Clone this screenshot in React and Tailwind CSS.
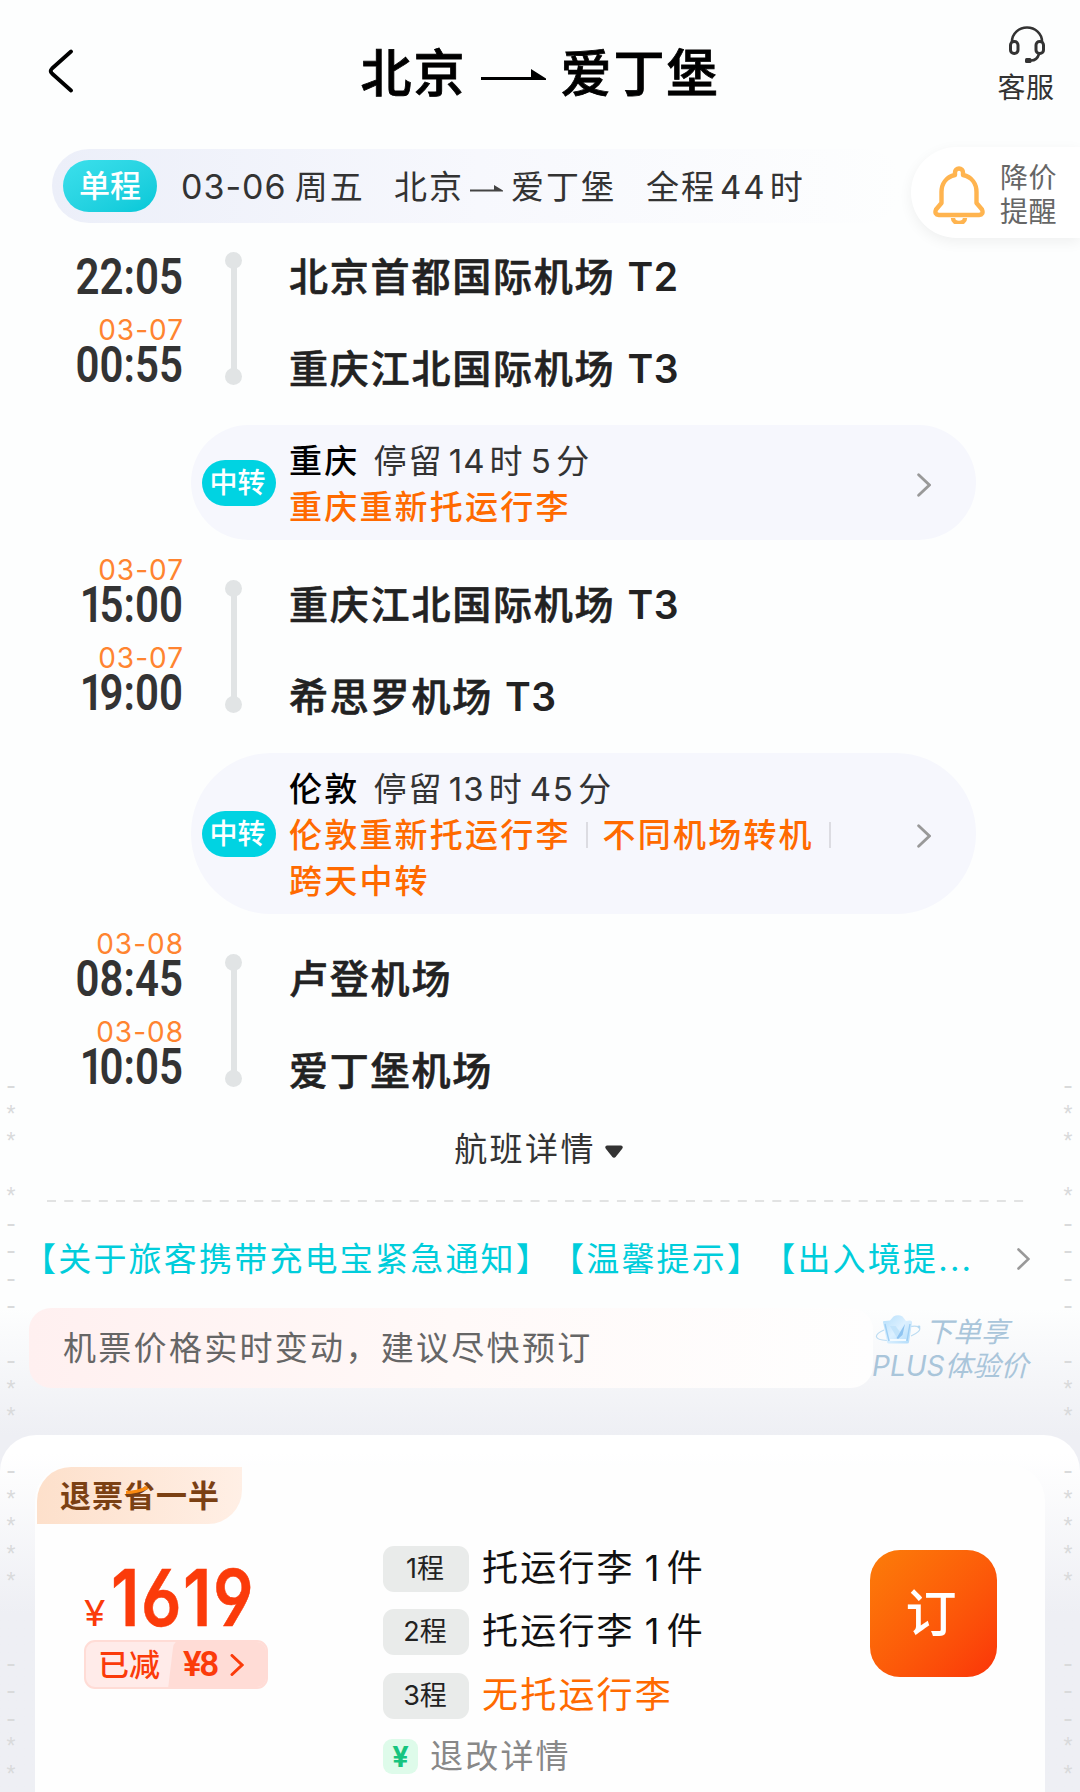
const legs = [
  {
    stops: [
      { time: '22:05', name: '北京首都国际机场', terminal: 'T2' },
      { date: '03-07', time: '00:55', name: '重庆江北国际机场', terminal: 'T3' },
    ],
    transfer: { city: '重庆', hours: '14', minutes: '5', notes: [['重庆重新托运行李']] },
  },
  {
    stops: [
      { date: '03-07', time: '15:00', name: '重庆江北国际机场', terminal: 'T3' },
      { date: '03-07', time: '19:00', name: '希思罗机场', terminal: 'T3' },
    ],
    transfer: {
      city: '伦敦', hours: '13', minutes: '45',
      notes: [['伦敦重新托运行李', '不同机场转机', ''], ['跨天中转']],
    },
  },
  {
    stops: [
      { date: '03-08', time: '08:45', name: '卢登机场' },
      { date: '03-08', time: '10:05', name: '爱丁堡机场' },
    ],
  },
];

const baggage = [
  { no: '1', count: '1' },
  { no: '2', count: '1' },
  { no: '3' },
];

const marks = '-** *---- -** -****  ---**'.split('');

export default function App() {
  return (
    <div className="relative h-[1792px] w-[1080px] overflow-hidden bg-[#fdfefe] font-['Noto_Sans_CJK_SC',sans-serif] text-[#333]">
      <Header />
      <Summary />
      <PriceAlert />
      <div className="pt-[7px]">
        {legs.map((leg, i) => (
          <div key={i}>
            <Leg stops={leg.stops} />
            {leg.transfer && <Transfer {...leg.transfer} />}
          </div>
        ))}
      </div>

      <div className="flex h-[63px] items-center justify-center gap-[8px] pr-[2px] text-[33px] leading-[63px] tracking-[2.4px]">
        <span className="-mt-px">航班详情</span>
        <svg width="20" height="14" viewBox="0 0 20 14" className="mt-2" fill="#333">
          <path d="M3 0.5H17Q20 1.5 18 4L12 11.5Q10 14 8 11.5L2 4Q0 1.5 3 0.5Z" />
        </svg>
      </div>
      <svg width="978" height="2" className="ml-[47px] mt-[21px] block">
        <path d="M0 1H978" stroke="#e2e3e3" strokeWidth="2" strokeDasharray="9 8.27" />
      </svg>

      <div className="flex h-[106px] items-center pl-[23px] text-[33px] leading-[48px] tracking-[2.2px] text-[#00cddb]">
        <div className="mt-[3px] w-[994px] whitespace-nowrap [text-spacing-trim:space-all]">
          【关于旅客携带充电宝紧急通知】【温馨提示】【出入境提<Latin>...</Latin>
        </div>
        <Chevron className="mt-[8px] h-[22px] w-[13px]" color="#999" />
      </div>

      <div className="flex h-[127px] bg-linear-to-b from-[#fdfefe] to-[#eeeff4] pl-[29px]">
        <div className="flex h-[80px] w-[844px] items-center rounded-[22px] bg-linear-to-r from-[#fff0f0] via-[#fff9f8] to-[#fefefe] pl-[34px] text-[33px] leading-[48px] tracking-[2.3px] text-[#666]">
          <span className="-mt-1">机票价格实时变动，建议尽快预订</span>
        </div>
        <div className="-ml-px pt-[5px] text-[28px] leading-[34px] text-[#a9c5da] italic">
          <div className="flex items-center gap-[4px] pl-[3px]">
            <PlusCrown />
            <span>下单享</span>
          </div>
          <div className="whitespace-nowrap"><Latin>PLUS</Latin>体验价</div>
        </div>
      </div>

      <FareSheet />
      <SideMarks className="left-[5px]" />
      <SideMarks className="right-[6px]" />
    </div>
  );
}

function Latin({ children, className = '' }) {
  return <span className={`font-[Inter] leading-none ${className}`}>{children}</span>;
}

function Chevron({ className, color, width = 2.6 }) {
  return (
    <svg viewBox="0 0 13 22" className={className} fill="none" stroke={color} strokeWidth={width} strokeLinecap="round">
      <path d="M1.5 1.5L11.5 11L1.5 20.5" />
    </svg>
  );
}

function Header() {
  return (
    <header className="flex h-[149px] justify-between">
      <div className="w-[110px] pl-[48px] pt-[49px]">
        <svg width="26" height="44" viewBox="0 0 26 44" fill="none" stroke="#000" strokeWidth="3.8" strokeLinecap="round" strokeLinejoin="round">
          <path d="M23 2.5L4 19.5Q1.5 22 4 24.5L23 41.5" />
        </svg>
      </div>
      <h1 className="flex pt-[34px] text-[51px] leading-[72px] font-medium tracking-[2px] text-black [-webkit-text-stroke:0.8px_#000]">
        北京
        <svg width="66" height="12" viewBox="0 0 66 12" className="ml-[14px] mr-[14px] mt-[35px]" fill="#000">
          <path d="M0 8H50V0L65 9.5V11H0Z" />
        </svg>
        爱丁堡
      </h1>
      <div className="flex w-[110px] flex-col items-center pl-px pt-[26px]">
        <svg width="38" height="38" viewBox="0 0 38 38" fill="none" stroke="#333" strokeWidth="2.6" className="ml-[2px]">
          <path d="M4 17V15.5A15 14 0 0 1 34 15.5V17" />
          <rect x="2.5" y="15.5" width="7.5" height="12" rx="3.6" strokeWidth="3" />
          <rect x="28" y="15.5" width="7.5" height="12" rx="3.6" strokeWidth="3" />
          <path d="M31 28Q29 34.5 23 34.5" />
          <rect x="17" y="32" width="6.5" height="5" rx="1.5" fill="#333" stroke="none" />
        </svg>
        <span className="mt-[4px] ml-px text-[28px] leading-[36px] tracking-[0.5px]">客服</span>
      </div>
    </header>
  );
}

function Summary() {
  return (
    <div className="ml-[52px] flex h-[74px] w-[850px] items-center rounded-full bg-linear-to-r from-[#eceff9] via-[#f7f8fd] to-[#fdfefe] pl-[11px] text-[33px] leading-[48px]">
      <span className="flex h-[52px] w-[94px] items-center justify-center rounded-[26px] bg-linear-to-br from-[#3be0ec] to-[#00c8d8] text-[31px] leading-[44px] font-medium text-white">
        <span className="-mt-1">单程</span>
      </span>
      <div className="-mt-[3px] flex tracking-[2px]">
        <span className="ml-[24px] w-[213px] whitespace-nowrap"><Latin className="mr-[8px] text-[34px] tracking-[1px]">03-06</Latin>周五</span>
        <span className="w-[76px]">北京</span>
        <svg width="33" height="8" viewBox="0 0 33 8" className="mr-[8px] mt-[24px]" fill="#444">
          <path d="M0 4.6H24V0L33 5.6V6.4H0Z" />
        </svg>
        <span className="w-[135px]">爱丁堡</span>
        <span>全程<Latin className="mr-[3px] ml-1">44</Latin>时</span>
      </div>
    </div>
  );
}

function PriceAlert() {
  return (
    <div className="absolute top-[147px] right-0 flex h-[91px] w-[169px] items-center rounded-l-full bg-white pl-[22px] shadow-[0_4px_14px_rgba(0,0,0,0.06)]">
      <svg width="52" height="58" viewBox="0 0 52 58" fill="none" stroke="#ffb44f" strokeWidth="4.4" strokeLinejoin="round" className="mt-[5px]">
        <path d="M22 9V6.5A4 4 0 0 1 30 6.5V9C39 11 43.500 18 43.500 26V37L49 43.500Q51 48.500 46 49H6Q1 48.500 3 43.500L8.500 37V26C8.500 18 13 11 22 9Z" />
        <path d="M20 52A6 5 0 0 0 32 52" />
      </svg>
      <div className="mt-px ml-[15px] text-[28px] leading-[34px] tracking-[0.5px] text-[#666]">降价<br />提醒</div>
    </div>
  );
}

function Leg({ stops }) {
  return (
    <div className="flex h-[184px]">
      <div className="flex w-[183px] flex-col items-end pt-px">
        {stops.map((s, i) => (
          <div key={i} className="mb-[17px] flex flex-col items-end">
            <div className="-mr-px h-[22px] font-[Inter] text-[28px] leading-[22px] tracking-[1px] text-[#ff8430]">{s.date}</div>
            <div className="h-[49px] origin-right scale-x-[0.84] font-[Roboto] text-[50px] leading-[49px] font-semibold">
              {s.time.startsWith('1') ? <><span className="tracking-[-5px]">1</span>{s.time.slice(1)}</> : s.time}
            </div>
          </div>
        ))}
      </div>
      <div className="ml-[42px] mt-[22px] flex w-[17px] flex-col items-center">
        <i className="size-[17px] rounded-full bg-[#e1e4e5]" />
        <i className="-my-1 h-[107px] w-[6px] bg-[#e1e4e5]" />
        <i className="size-[17px] rounded-full bg-[#e1e4e5]" />
      </div>
      <div className="ml-[47px] text-[39px] leading-[88px] font-medium tracking-[1.8px] text-[#222] [-webkit-text-stroke:0.6px_#222]">
        {stops.map((s, i) => (
          <div key={i} className="h-[92px] whitespace-nowrap">
            {s.name}{s.terminal && <Latin className="ml-[12px] font-semibold tracking-[0.5px] [-webkit-text-stroke:0]">{s.terminal}</Latin>}
          </div>
        ))}
      </div>
    </div>
  );
}

function Transfer({ city, hours, minutes, notes }) {
  return (
    <div className="mt-[11px] mb-[18px] ml-[191px] flex w-[785px] items-center rounded-[80px] bg-[#f6f7fd] py-[11px] pl-[11px]">
      <span className="flex h-[46px] w-[74px] items-center justify-center rounded-[23px] bg-[#00d3e2] text-[28px] leading-[40px] font-medium text-white">
        <span className="-mt-[3px] -ml-[3px]">中转</span>
      </span>
      <div className="-mt-[3px] ml-[13px] w-[628px] pt-[3px] pb-px text-[33px] leading-[46px] tracking-[2.2px]">
        <div className="h-[46px]">
          <span className="mr-[14px] font-medium text-black">{city}</span>
          停留<Latin className="mr-[4px] ml-[5px] tracking-[1px]">{hours}</Latin>时<Latin className="mr-[4px] ml-[6px] tracking-[1.5px]">{minutes}</Latin>分
        </div>
        {notes.map((row, i) => (
          <div key={i} className="flex h-[46px] items-center font-medium text-[#ff6a00]">
            {row.map((note, j) => (
              <span key={j} className="flex items-center">
                {j > 0 && <i className="mt-1 mr-[15px] ml-[15px] h-[26px] w-[2px] bg-[#dcdce2]" />}
                {note}
              </span>
            ))}
          </div>
        ))}
      </div>
      <Chevron className="mt-[4px] h-[24px] w-[14px]" color="#999" />
    </div>
  );
}

function PlusCrown() {
  return (
    <svg width="46" height="30" viewBox="0 0 46 30" className="shrink-0">
      <defs>
        <linearGradient id="crown" x1="0" y1="0" x2="1" y2="1">
          <stop offset="0" stopColor="#b5dffb" />
          <stop offset="0.5" stopColor="#dcf0ff" />
          <stop offset="1" stopColor="#b0dbfa" />
        </linearGradient>
      </defs>
      <path d="M33 12C46 9 50 15 36 21M9 15C-2 20 -1 25 12 25.500" stroke="#bcdcf2" strokeWidth="1.2" fill="none" />
      <path d="M8 7Q8 5.500 10 6L15 5.500L18.500 1.500Q23 -1 27.500 1.500L31 6L35 5.500Q37.500 5.500 37 8L34 27Q34 28.500 32 28.500H14Q12 28.500 12 27Z" fill="url(#crown)" />
      <path d="M10 9L14 26M35 9L32 26" stroke="#9fcff4" strokeWidth="1.4" fill="none" />
      <path d="M15 25H31" stroke="#f2faff" strokeWidth="2" />
      <path d="M15 11L21.500 22L25 17L20.500 11Z" fill="#c3e4fb" />
      <path d="M21.500 23L30 9L27.500 20L23 24Z" fill="#8fc4f1" />
      <circle cx="44" cy="12" r="1.4" fill="#b4d8f1" />
    </svg>
  );
}

function FareSheet() {
  return (
    <div className="bg-[#eeeff4]">
      <div className="h-[357px] rounded-t-[36px] bg-linear-to-b from-white from-5% to-[#eeeff4] to-50% px-[35px] pt-[30px]">
        <div className="h-[327px] rounded-t-[36px] bg-[#fefefe] pt-[2px] pl-[2px]">
          <div className="relative flex h-[57px] w-[205px] items-center rounded-tl-[34px] rounded-br-[34px] bg-linear-to-r from-[#fde0cb] to-[#ffefe5] pl-[23px] text-[31px] leading-[44px] font-bold tracking-[1px] text-[#7b4013]">
            <span className="-mt-1">退票省一半</span>
            <svg width="24" height="9" viewBox="0 0 24 9" className="absolute top-[19px] left-[88px]">
              <path d="M1 6.500Q12 6.500 22.500 1.500" stroke="#fb8a10" strokeWidth="3.2" fill="none" />
            </svg>
          </div>
          <div className="flex">
            <Price />
            <Baggage />
            <button className="mt-[26px] ml-[133px] flex size-[127px] items-center justify-center rounded-[30px] bg-linear-to-br from-[#fc7c09] to-[#fb3309] text-[51px] leading-[70px] font-medium text-white">
              <span className="-mt-[7px] -ml-[5px]">订</span>
            </button>
          </div>
        </div>
      </div>
    </div>
  );
}

function Price() {
  return (
    <div className="w-[346px] pt-[33px] pl-[47px] text-[#fb3b0a]">
      <div className="-mt-px mb-px flex h-[83px] items-baseline">
        <Latin className="w-[27px] origin-left scale-x-[1.08] text-[36px]">¥</Latin>
        <span className="origin-left scale-x-[0.85] font-[Inter] text-[79px] leading-[83px] font-semibold tracking-[1.8px] [-webkit-text-stroke:0.5px_#fb3b0a] [font-feature-settings:'cv03','cv04']">1619</span>
      </div>
      <div className="flex h-[49px] w-[184px] overflow-hidden rounded-[11px] border-2 border-[#ffdcd6] bg-[#ffebe9] text-[31px] leading-[42px] font-medium">
        <span className="w-[82px] pl-[12px]">已减</span>
        <div className="relative flex w-[98px] items-center pl-[15px]">
          <svg width="100" height="49" viewBox="0 0 100 49" className="absolute -top-[2px] left-0" fill="#ffdcd6">
            <path d="M0 49L5 8Q6 0 14 0H100V49Z" />
          </svg>
          <span className="relative w-[47px] font-[Roboto] text-[35px] leading-none font-semibold tracking-[-2.5px]">¥8</span>
          <Chevron className="relative h-[22px] w-[14px]" color="#fb3b0a" width={3} />
        </div>
      </div>
    </div>
  );
}

function Baggage() {
  return (
    <div className="w-[354px] pt-[22px]">
      {baggage.map((b) => (
        <div key={b.no} className="mb-[17.400px] flex h-[46px] items-center">
          <span className="flex h-[46px] w-[86px] items-center justify-center rounded-[11px] bg-[#e9ebea] text-[27px] leading-[40px] text-[#222]">
            <span className="-mt-[4px] -ml-[2px]"><Latin>{b.no}</Latin>程</span>
          </span>
          {b.count ? (
            <span className="-mt-[8px] ml-[13px] text-[36px] leading-[46px] tracking-[2.2px] text-[#111]">托运行李<Latin className="mr-[5px] ml-[10px]">{b.count}</Latin>件</span>
          ) : (
            <span className="-mt-[7px] ml-[13px] text-[36px] leading-[46px] tracking-[2.2px] text-[#ff6a00]">无托运行李</span>
          )}
        </div>
      ))}
      <div className="flex h-[40px] items-center">
        <span className="flex size-[35px] items-center justify-center rounded-[9px] bg-[#defbea] font-[Inter] text-[29px] leading-none font-bold text-[#16c47f]">¥</span>
        <span className="-mt-1 ml-[12px] text-[33px] leading-[40px] tracking-[2.2px] text-[#888]">退改详情</span>
      </div>
    </div>
  );
}

function SideMarks({ className }) {
  return (
    <div className={`absolute top-[1074px] flex w-[12px] flex-col items-center text-[#d9dadb] ${className}`}>
      {marks.map((m, i) => (
        <span key={i} className={m === '*' ? "-mt-px mb-px flex h-[27.500px] items-center font-['Liberation_Sans'] text-[23px] leading-none" : "flex h-[27.500px] items-center font-['Liberation_Mono'] text-[25px] leading-none"}>{m}</span>
      ))}
    </div>
  );
}
